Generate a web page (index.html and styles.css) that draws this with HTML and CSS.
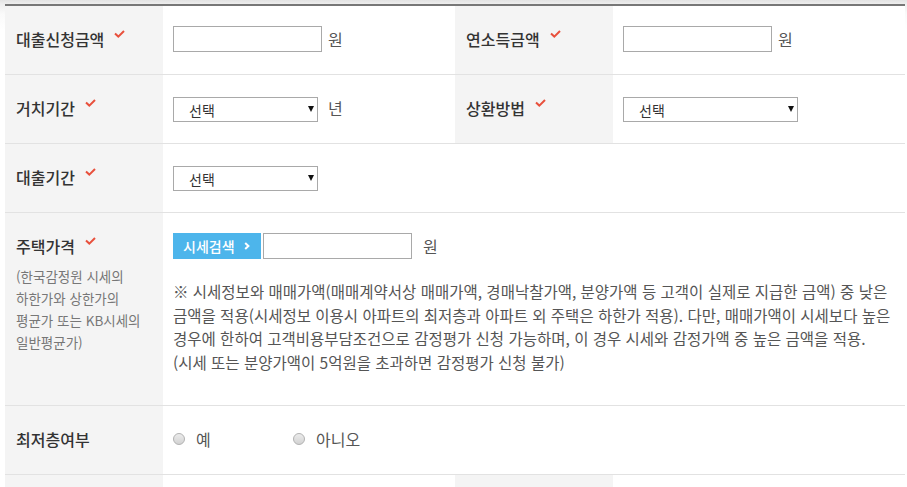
FILE: index.html
```html
<!DOCTYPE html>
<html lang="ko">
<head>
    <meta charset="UTF-8">
    <meta name="viewport" content="width=device-width, initial-scale=1.0">
    <title>대출 신청</title>
    <link rel="stylesheet" href="styles.css">
</head>
<body>

<div class="form-wrap">
    <table class="loan-table">
        <colgroup>
            <col class="col-th">
            <col class="col-td">
            <col class="col-th">
            <col class="col-td">
        </colgroup>
        <tbody>
            <!-- 신청금액 / 소득 -->
            <tr>
                <th>대출신청금액<svg class="req" width="11" height="8" viewBox="0 0 11 8"><polyline points="1,3.5 4.3,6.6 10,1" /></svg></th>
                <td>
                    <div class="field">
                        <input type="text" class="inp">
                        <span class="unit">원</span>
                    </div>
                </td>
                <th>연소득금액<svg class="req" width="11" height="8" viewBox="0 0 11 8"><polyline points="1,3.5 4.3,6.6 10,1" /></svg></th>
                <td>
                    <div class="field">
                        <input type="text" class="inp">
                        <span class="unit">원</span>
                    </div>
                </td>
            </tr>
            <tr>
                <th>거치기간<svg class="req" width="11" height="8" viewBox="0 0 11 8"><polyline points="1,3.5 4.3,6.6 10,1" /></svg></th>
                <td>
                    <div class="field">
                        <span class="sel-box"><select class="sel"><option>선택</option></select></span>
                        <span class="unit unit-sel">년</span>
                    </div>
                </td>
                <th>상환방법<svg class="req" width="11" height="8" viewBox="0 0 11 8"><polyline points="1,3.5 4.3,6.6 10,1" /></svg></th>
                <td>
                    <div class="field">
                        <span class="sel-box"><select class="sel sel-wide"><option>선택</option></select></span>
                    </div>
                </td>
            </tr>
            <tr>
                <th>대출기간<svg class="req" width="11" height="8" viewBox="0 0 11 8"><polyline points="1,3.5 4.3,6.6 10,1" /></svg></th>
                <td colspan="3">
                    <div class="field">
                        <span class="sel-box"><select class="sel"><option>선택</option></select></span>
                    </div>
                </td>
            </tr>
            <!-- 주택가격 -->
            <tr>
                <th>
                    주택가격<svg class="req" width="11" height="8" viewBox="0 0 11 8"><polyline points="1,3.5 4.3,6.6 10,1" /></svg>
                    <p class="note">(한국감정원 시세의<br>하한가와 상한가의<br>평균가 또는 KB시세의<br>일반평균가)</p>
                </th>
                <td colspan="3">
                    <div class="field">
                        <button type="button" class="btn-search">시세검색<svg class="arr" width="6" height="8" viewBox="0 0 6 8"><polyline points="1.2,1 4.4,4 1.2,7" /></svg></button>
                        <input type="text" class="inp inp-price">
                        <span class="unit unit-price">원</span>
                    </div>
                    <p class="guide">※ 시세정보와 매매가액(매매계약서상 매매가액, 경매낙찰가액, 분양가액 등 고객이 실제로 지급한 금액) 중 낮은 금액을 적용(시세정보 이용시 아파트의 최저층과 아파트 외 주택은 하한가 적용). 다만, 매매가액이 시세보다 높은 경우에 한하여 고객비용부담조건으로 감정평가 신청 가능하며, 이 경우 시세와 감정가액 중 높은 금액을 적용.<br>(시세 또는 분양가액이 5억원을 초과하면 감정평가 신청 불가)</p>
                </td>
            </tr>
            <tr>
                <th>최저층여부</th>
                <td colspan="3">
                    <div class="field">
                        <label class="radio"><input type="radio" name="floor"> 예</label>
                        <label class="radio"><input type="radio" name="floor"> 아니오</label>
                    </div>
                </td>
            </tr>
            <tr>
                <th></th>
                <td></td>
                <th></th>
                <td></td>
            </tr>
        </tbody>
    </table>
</div>

</body>
</html>
```

FILE: styles.css
```css
html {
    overflow: hidden;
}
body {
    font-family: "Noto Sans CJK KR", "Noto Sans", sans-serif;
    background: linear-gradient(#e3e3e3 0, #eeeeee 4px, #fafafa 14px, #fff 30px);
    margin: 0;
    padding: 4px 2px 0 5px;
    color: #555;
    word-break: keep-all;
}
.loan-table {
    width: 900px;
    border-collapse: collapse;
    table-layout: fixed;
    border-top: 2px solid #777;
}
.col-th {
    width: 158px;
}
.col-td {
    width: 292px;
}
.loan-table th,
.loan-table td {
    border-bottom: 1px solid #e2e2e2;
    vertical-align: top;
    padding: 20px 10px 22px;
    line-height: 26px;
    height: 26px;
}
.loan-table th {
    background-color: #f4f4f4;
    text-align: left;
    font-size: 16px;
    font-weight: 500;
    color: #333;
    padding-left: 11px;
}
.loan-table td {
    background-color: #fff;
    font-size: 15.5px;
}
.req {
    display: inline-block;
    vertical-align: top;
    margin: 4px 0 0 10px;
    fill: none;
    stroke: #e8503c;
    stroke-width: 2;
}
.note {
    margin: 6px 0 0;
    font-size: 13.5px;
    font-weight: normal;
    line-height: 22px;
    color: #777;
}
.field {
    display: flex;
    align-items: center;
    height: 26px;
}
.inp {
    box-sizing: border-box;
    width: 149px;
    height: 26px;
    margin: 0;
    border: 1px solid #a9a9a9;
    padding: 0 6px;
    font-family: inherit;
    font-size: 14px;
}
.unit {
    margin-left: 6px;
    font-size: 16px;
    color: #555;
}
.unit-sel {
    margin-left: 10px;
}
.unit-price {
    margin-left: 11px;
}
.sel-box {
    position: relative;
    display: inline-block;
    height: 25px;
}
.sel-box::after {
    content: "";
    position: absolute;
    right: 4px;
    top: 10px;
    border-left: 3px solid transparent;
    border-right: 3px solid transparent;
    border-top: 6px solid #111;
    pointer-events: none;
}
.sel {
    -webkit-appearance: none;
    appearance: none;
    box-sizing: border-box;
    width: 145px;
    height: 25px;
    margin: 0;
    border: 1px solid #a9a9a9;
    border-radius: 0;
    background-color: #fff;
    padding: 0 0 0 15px;
    font-family: inherit;
    font-size: 14px;
    color: #333;
}
.sel-wide {
    width: 175px;
}
.btn-search {
    display: inline-flex;
    align-items: center;
    box-sizing: border-box;
    width: 88px;
    height: 26px;
    margin: 0 2px 0 0;
    border: none;
    padding: 0 0 0 10px;
    background-color: #4db5eb;
    color: #fff;
    font-family: inherit;
    font-size: 14px;
    font-weight: 500;
}
.arr {
    margin-left: 9px;
    fill: none;
    stroke: #fff;
    stroke-width: 2;
}
.inp-price {
    width: 149px;
}
.guide {
    margin: 21px 0 9px;
    font-size: 15.5px;
    line-height: 23.5px;
    color: #555;
}
.radio {
    display: inline-flex;
    align-items: center;
    width: 120px;
    font-size: 16px;
    color: #555;
}
.radio input {
    -webkit-appearance: none;
    appearance: none;
    width: 12px;
    height: 12px;
    margin: 0 11px 0 0;
    border: 1px solid #b3b3b3;
    border-radius: 50%;
    background: linear-gradient(#ececec, #d2d2d2);
}
```
